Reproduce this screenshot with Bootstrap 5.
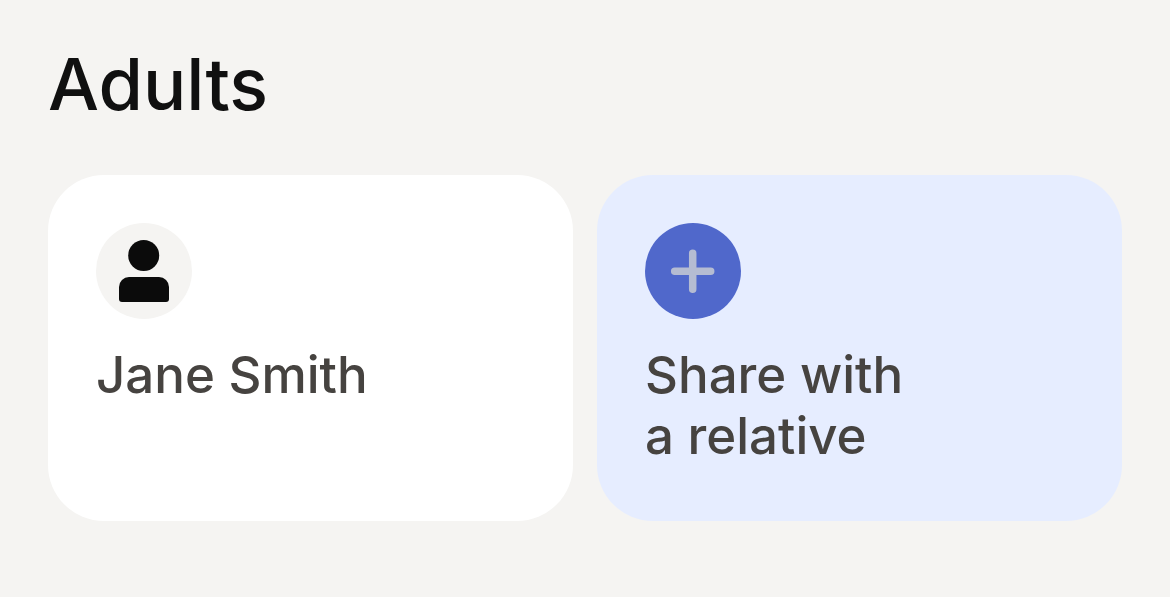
<!DOCTYPE html>
<html lang="en">
<head>
<meta charset="utf-8">
<meta name="viewport" content="width=device-width, initial-scale=1">
<title>Adults</title>
<link href="https://cdn.jsdelivr.net/npm/bootstrap@5.3.0/dist/css/bootstrap.min.css" rel="stylesheet">
<style>
body { background: #f5f4f2; color: #101010; font-family: Inter, "Liberation Sans", sans-serif; }
.page { padding: 38px 48px; }
.page-title { font-size: 72px; line-height: 92px; font-weight: 500; margin-bottom: 45px; }
.tile { min-height: 346px; padding: 48px; border-radius: 56px; background: #fff; color: #464340; text-decoration: none; text-align: left; border: 0; }
.tile-share { background: #e6edff; }
.tile-icon { width: 96px; height: 96px; margin-bottom: 25px; }
.tile-name { font-size: 51px; line-height: 61px; font-weight: 500; }
</style>
</head>
<body>
<main class="page">
  <h1 class="page-title">Adults</h1>
  <div class="row row-cols-2 gx-4">
    <div class="col">
      <a href="#" class="tile d-flex flex-column align-items-start h-100">
        <svg class="tile-icon" viewBox="0 0 96 96" aria-hidden="true">
          <circle cx="48" cy="48" r="48" fill="#f5f4f2"/>
          <circle cx="47.700" cy="32.500" r="15.500" fill="#0b0b0b"/>
          <path d="M23 64a10 10 0 0 1 10-10h30a10 10 0 0 1 10 10V76a3 3 0 0 1-3 3H26a3 3 0 0 1-3-3z" fill="#0b0b0b"/>
        </svg>
        <span class="tile-name">Jane Smith</span>
      </a>
    </div>
    <div class="col">
      <button type="button" class="tile tile-share d-flex flex-column align-items-start w-100 h-100">
        <svg class="tile-icon" viewBox="0 0 96 96" aria-hidden="true">
          <circle cx="48" cy="48" r="48" fill="#5068cb"/>
          <path d="M47.700 30.300v36M29.700 48.300h36" stroke="#b5bcd2" stroke-width="7.500" stroke-linecap="round"/>
        </svg>
        <span class="tile-name">Share with<br>a relative</span>
      </button>
    </div>
  </div>
</main>
<script src="https://cdn.jsdelivr.net/npm/bootstrap@5.3.0/dist/js/bootstrap.bundle.min.js"></script>
</body>
</html>
